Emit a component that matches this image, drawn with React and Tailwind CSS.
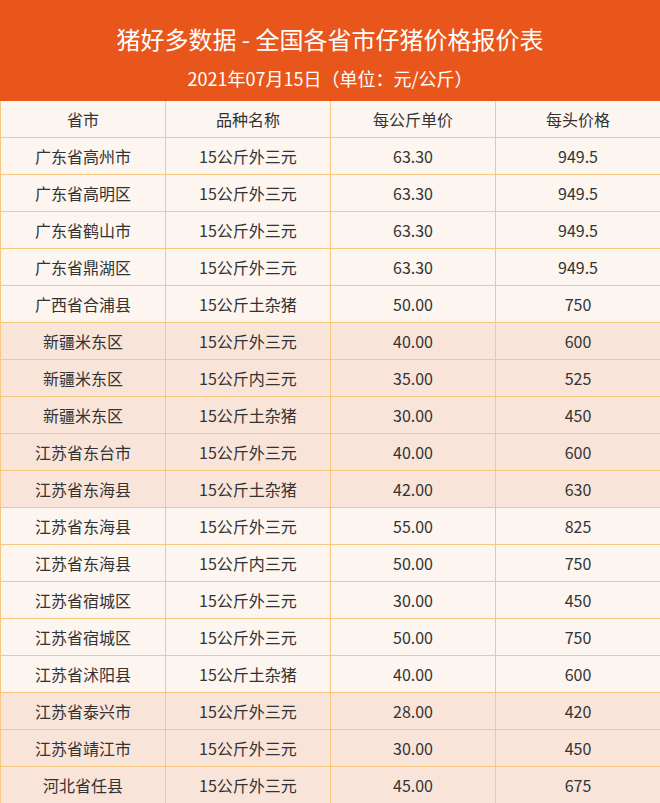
import React from 'react';

const rows = [
  ['广东省高州市', '15公斤外三元', '63.30', '949.5', false],
  ['广东省高明区', '15公斤外三元', '63.30', '949.5', false],
  ['广东省鹤山市', '15公斤外三元', '63.30', '949.5', false],
  ['广东省鼎湖区', '15公斤外三元', '63.30', '949.5', false],
  ['广西省合浦县', '15公斤土杂猪', '50.00', '750', false],
  ['新疆米东区', '15公斤外三元', '40.00', '600', true],
  ['新疆米东区', '15公斤内三元', '35.00', '525', true],
  ['新疆米东区', '15公斤土杂猪', '30.00', '450', true],
  ['江苏省东台市', '15公斤外三元', '40.00', '600', true],
  ['江苏省东海县', '15公斤土杂猪', '42.00', '630', true],
  ['江苏省东海县', '15公斤外三元', '55.00', '825', false],
  ['江苏省东海县', '15公斤内三元', '50.00', '750', false],
  ['江苏省宿城区', '15公斤外三元', '30.00', '450', false],
  ['江苏省宿城区', '15公斤外三元', '50.00', '750', false],
  ['江苏省沭阳县', '15公斤土杂猪', '40.00', '600', false],
  ['江苏省泰兴市', '15公斤外三元', '28.00', '420', true],
  ['江苏省靖江市', '15公斤外三元', '30.00', '450', true],
  ['河北省任县', '15公斤外三元', '45.00', '675', true],
];

function Row({ cells, pink }) {
  return (
    <div className={`grid grid-cols-4 h-[37px] border-b border-[#f6c97e] ${pink ? 'bg-[#f9e4d9]' : 'bg-[#fcf5f0]'}`}>
      {cells.map((c, i) => (
        <div key={i} className="flex items-center justify-center border-l border-[#f6c97e] text-[16px] text-[#333333]">
          {c}
        </div>
      ))}
    </div>
  );
}

export default function App() {
  return (
    <div className="w-[660px] h-[803px] overflow-hidden bg-white" style={{ fontFamily: '"Noto Sans CJK SC", "Noto Sans", sans-serif' }}>
      {/* Header */}
      <div className="h-[101px] bg-[#e8561b] text-white flex flex-col items-center">
        <h1 className="mt-[22px] text-[24px] leading-[34px]">猪好多数据 - 全国各省市仔猪价格报价表</h1>
        <p className="mt-[9px] text-[18px] leading-[26px] [text-spacing-trim:space-all]">2021年07月15日（单位：元/公斤）</p>
      </div>

      {/* Table */}
      <Row cells={['省市', '品种名称', '每公斤单价', '每头价格']} pink={false} />
      {rows.map((r, i) => (
        <Row key={i} cells={r.slice(0, 4)} pink={r[4]} />
      ))}
    </div>
  );
}
